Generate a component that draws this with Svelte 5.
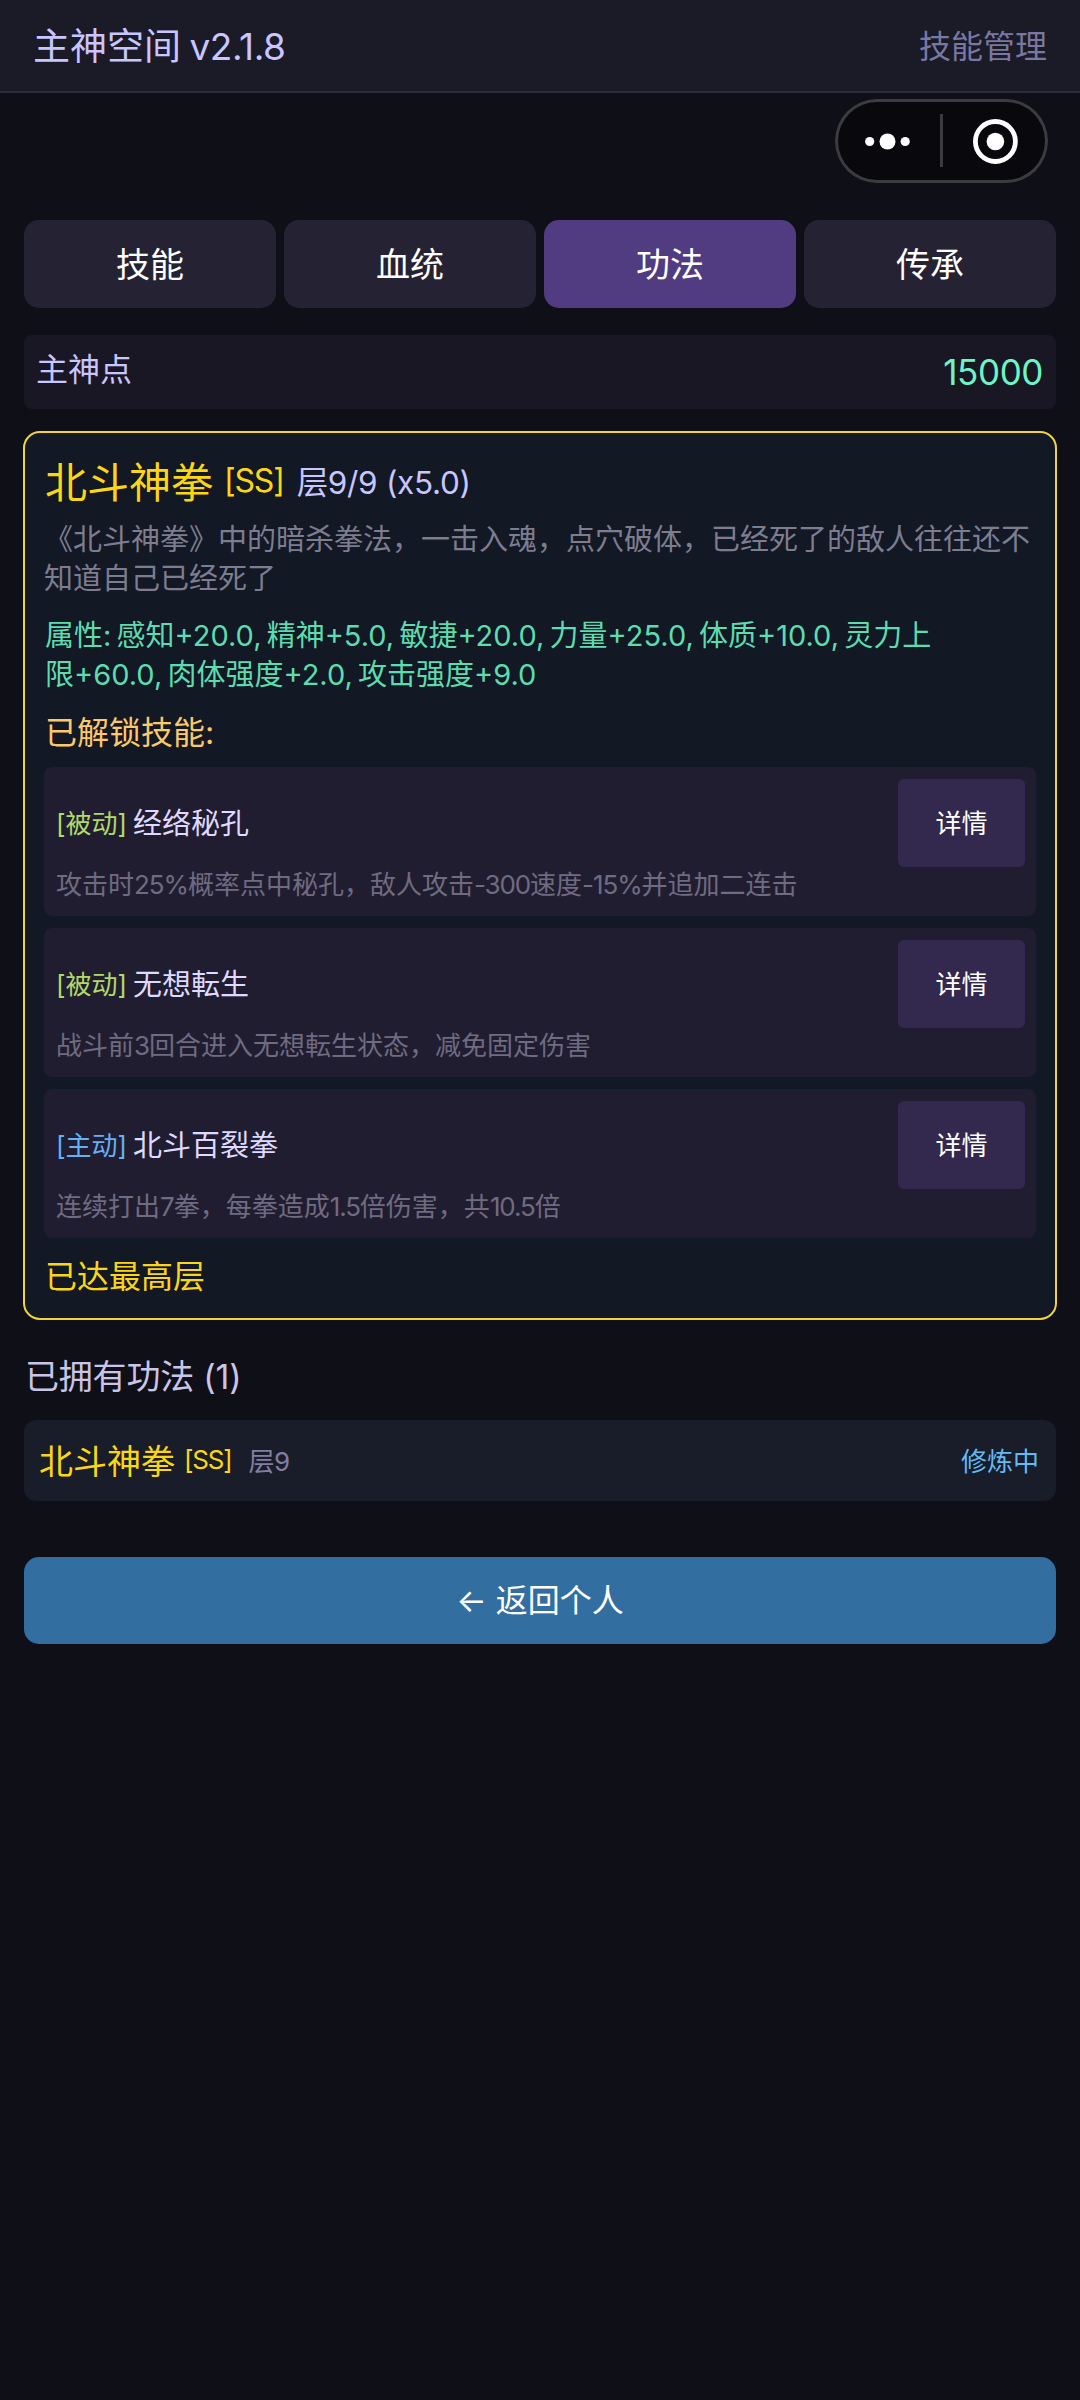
<script lang="ts">
    const tabs = ["技能", "血统", "功法", "传承"];
    let active = "功法";

    const skills = [
        { kind: "被动", name: "经络秘孔", desc: "攻击时25%概率点中秘孔，敌人攻击-300速度-15%并追加二连击" },
        { kind: "被动", name: "无想転生", desc: "战斗前3回合进入无想転生状态，减免固定伤害" },
        { kind: "主动", name: "北斗百裂拳", desc: "连续打出7拳，每拳造成1.5倍伤害，共10.5倍" },
    ];

    const owned = [{ name: "北斗神拳", rank: "SS", level: 9, status: "修炼中" }];

    // odd entries are the numbers
    function splitNumbers(text: string) {
        return text.split(/([-\d.%]+)/);
    }
</script>

<div class="page">
    <header>
        <span class="title">主神空间 <span class="version">v2.1.8</span></span>
        <span class="section">技能管理</span>
    </header>

    <div class="capsule">
        <svg width="213" height="84" viewBox="0 0 213 84">
            <circle cx="34.7" cy="42.5" r="4.6" fill="#fff" />
            <circle cx="52.5" cy="42.5" r="8" fill="#fff" />
            <circle cx="70.2" cy="42.5" r="4.6" fill="#fff" />
            <rect x="105" y="15" width="3" height="53" fill="#3c3b3f" />
            <circle cx="160.4" cy="42.5" r="20" fill="none" stroke="#fff" stroke-width="4.8" />
            <circle cx="160.4" cy="42.5" r="8.8" fill="#fff" />
        </svg>
    </div>

    <main>
        <nav class="tabs">
            {#each tabs as tab}
                <button class="tab" class:active={tab === active} on:click={() => (active = tab)}>{tab}</button>
            {/each}
        </nav>

        <div class="points">
            <span class="pointsLabel">主神点</span>
            <span class="pointsValue">15000</span>
        </div>

        <section class="card">
            <div class="cardHead">
                <span class="cardName">北斗神拳</span>
                <span class="cardRank">[SS]</span>
                <span class="cardLevel">层9/9 (x5.0)</span>
            </div>
            <p class="cardDesc">《北斗神拳》中的暗杀拳法，一击入魂，点穴破体，已经死了的敌人往往还不知道自己已经死了</p>
            <p class="attrs">属性: 感知+20.0, 精神+5.0, 敏捷+20.0, 力量+25.0, 体质+10.0, 灵力上限+60.0, 肉体强度+2.0, 攻击强度+9.0</p>
            <p class="unlocked">已解锁技能:</p>
            <div class="skills">
                {#each skills as skill}
                    <div class="skill">
                        <div class="skillRow">
                            <span class="kind" class:passive={skill.kind === "被动"}>[{skill.kind}]</span>
                            <span class="skillName">{skill.name}</span>
                            <button class="detail">详情</button>
                        </div>
                        <p class="skillDesc">{#each splitNumbers(skill.desc) as part, i}<span class:num={i % 2 === 1}>{part}</span>{/each}</p>
                    </div>
                {/each}
            </div>
            <p class="maxed">已达最高层</p>
        </section>

        <h2>已拥有功法 ({owned.length})</h2>
        {#each owned as item}
            <div class="owned">
                <span class="ownedName">{item.name}</span>
                <span class="ownedRank">[{item.rank}]</span>
                <span class="ownedLevel">层{item.level}</span>
                <span class="status">{item.status}</span>
            </div>
        {/each}

        <button class="back">← 返回个人</button>
    </main>
</div>

<style>
    :global(body) {
        background: #0f0f18;
    }
    .page {
        position: relative;
        width: 1080px;
        min-height: 2400px;
        background: #0f0f18;
        font-family: Inter, "Noto Sans CJK SC", sans-serif;
    }
    p, h2 {
        margin: 0;
        font-weight: 400;
    }
    button {
        border: 0;
        padding: 0 0 4px;
        font-family: inherit;
        color: #fff;
    }
    header {
        display: flex;
        align-items: center;
        justify-content: space-between;
        box-sizing: border-box;
        height: 93px;
        padding: 0 33px 4px 33px;
        background: #1b1a27;
        border-bottom: 2px solid #2b2940;
    }
    .title {
        font-size: 37px;
        word-spacing: -2px;
        color: #c8c5ff;
    }
    .version {
        letter-spacing: -.4px;
    }
    .section {
        font-size: 32px;
        color: #7a78a3;
    }
    .capsule {
        position: absolute;
        top: 99px;
        left: 835px;
        width: 213px;
        height: 84px;
        border-radius: 42px;
        background: #09080d;
        box-shadow: inset 0 0 0 3px #3c3b3f;
    }
    .capsule svg {
        display: block;
    }
    main {
        padding: 127px 24px 0;
    }
    .tabs {
        display: grid;
        grid-template-columns: repeat(4, 1fr);
        gap: 8px;
    }
    .tab {
        height: 88px;
        border-radius: 15px;
        background: #252333;
        font-size: 34px;
    }
    .tab.active {
        background: #513c82;
    }
    .points {
        display: flex;
        justify-content: space-between;
        align-items: center;
        height: 74px;
        margin-top: 27px;
        padding: 0 13px 0 12px;
        border-radius: 8px;
        background: #191723;
    }
    .pointsLabel {
        font-size: 32px;
        line-height: 40px;
        padding-bottom: 4px;
        color: #c8c5ff;
    }
    .pointsValue {
        font-size: 35px;
        line-height: 40px;
        letter-spacing: -.4px;
        color: #6ef5c5;
    }
    .card {
        box-sizing: border-box;
        height: 889px;
        margin: 22px -1px 0;
        padding: 22px 19px 0;
        border: 2px solid #f2d33c;
        border-radius: 17px;
        background: #121824;
    }
    .cardHead {
        display: flex;
        align-items: center;
        height: 50px;
        padding-left: 1px;
    }
    .cardName {
        padding-bottom: 2px;
        font-size: 42px;
        color: #fcd615;
    }
    .cardRank {
        margin-left: 11px;
        font-size: 32px;
        letter-spacing: -1.2px;
        color: #fcd615;
    }
    .cardLevel {
        margin-left: 13px;
        font-size: 31.5px;
        letter-spacing: -.3px;
        color: #c8c5ff;
    }
    .cardDesc, .attrs {
        width: 992px;
        font-size: 29px;
        line-height: 39px;
        color: #7e7d8f;
    }
    .cardDesc {
        margin-top: 15px;
    }
    .attrs {
        width: 905px;
        margin-top: 18px;
        padding-left: 1px;
        word-spacing: -3px;
        color: #5cdcaf;
    }
    .unlocked {
        margin-top: 18px;
        padding-left: 1px;
        font-size: 32px;
        line-height: 42px;
        color: #fdc86a;
    }
    .skills {
        display: flex;
        flex-direction: column;
        gap: 12px;
        margin-top: 13px;
    }
    .skill {
        box-sizing: border-box;
        height: 149px;
        padding: 12px 11px 0 12px;
        border-radius: 8px;
        background: #211d31;
    }
    .skillRow {
        display: flex;
        align-items: center;
    }
    .kind, .skillName {
        padding-bottom: 4px;
    }
    .kind {
        font-size: 26px;
        color: #64b0f5;
    }
    .kind.passive {
        color: #b2d968;
    }
    .skillName {
        margin-left: 6px;
        font-size: 29px;
        color: #dedaff;
    }
    .detail {
        width: 127px;
        height: 88px;
        margin-left: auto;
        border-radius: 6px;
        background: #33284e;
        font-size: 26px;
    }
    .skillDesc {
        padding-top: 1px;
        font-size: 26px;
        line-height: 34px;
        color: #6f6b80;
    }
    .num {
        letter-spacing: -1.1px;
    }
    .maxed {
        margin-top: 18px;
        padding-left: 1px;
        font-size: 32px;
        line-height: 42px;
        color: #fad51a;
    }
    h2 {
        margin-top: 35px;
        padding-left: 1px;
        font-size: 34px;
        line-height: 44px;
        letter-spacing: -.2px;
        color: #cac5e6;
    }
    .owned {
        display: flex;
        align-items: center;
        box-sizing: border-box;
        height: 81px;
        margin-top: 21px;
        padding: 0 17px 2px 15px;
        border-radius: 12px;
        background: #191c29;
    }
    .ownedName {
        font-size: 34px;
        color: #fcd615;
    }
    .ownedRank {
        margin-left: 9px;
        font-size: 26px;
        letter-spacing: -1.2px;
        color: #fcd615;
    }
    .ownedLevel {
        margin-left: 17px;
        font-size: 26px;
        letter-spacing: -.5px;
        color: #827fa0;
    }
    .status {
        margin-left: auto;
        font-size: 26px;
        color: #62baf3;
    }
    .back {
        display: block;
        width: 100%;
        height: 87px;
        margin-top: 56px;
        padding-bottom: 6px;
        border-radius: 15px;
        background: #326fa0;
        font-size: 32px;
    }
</style>
